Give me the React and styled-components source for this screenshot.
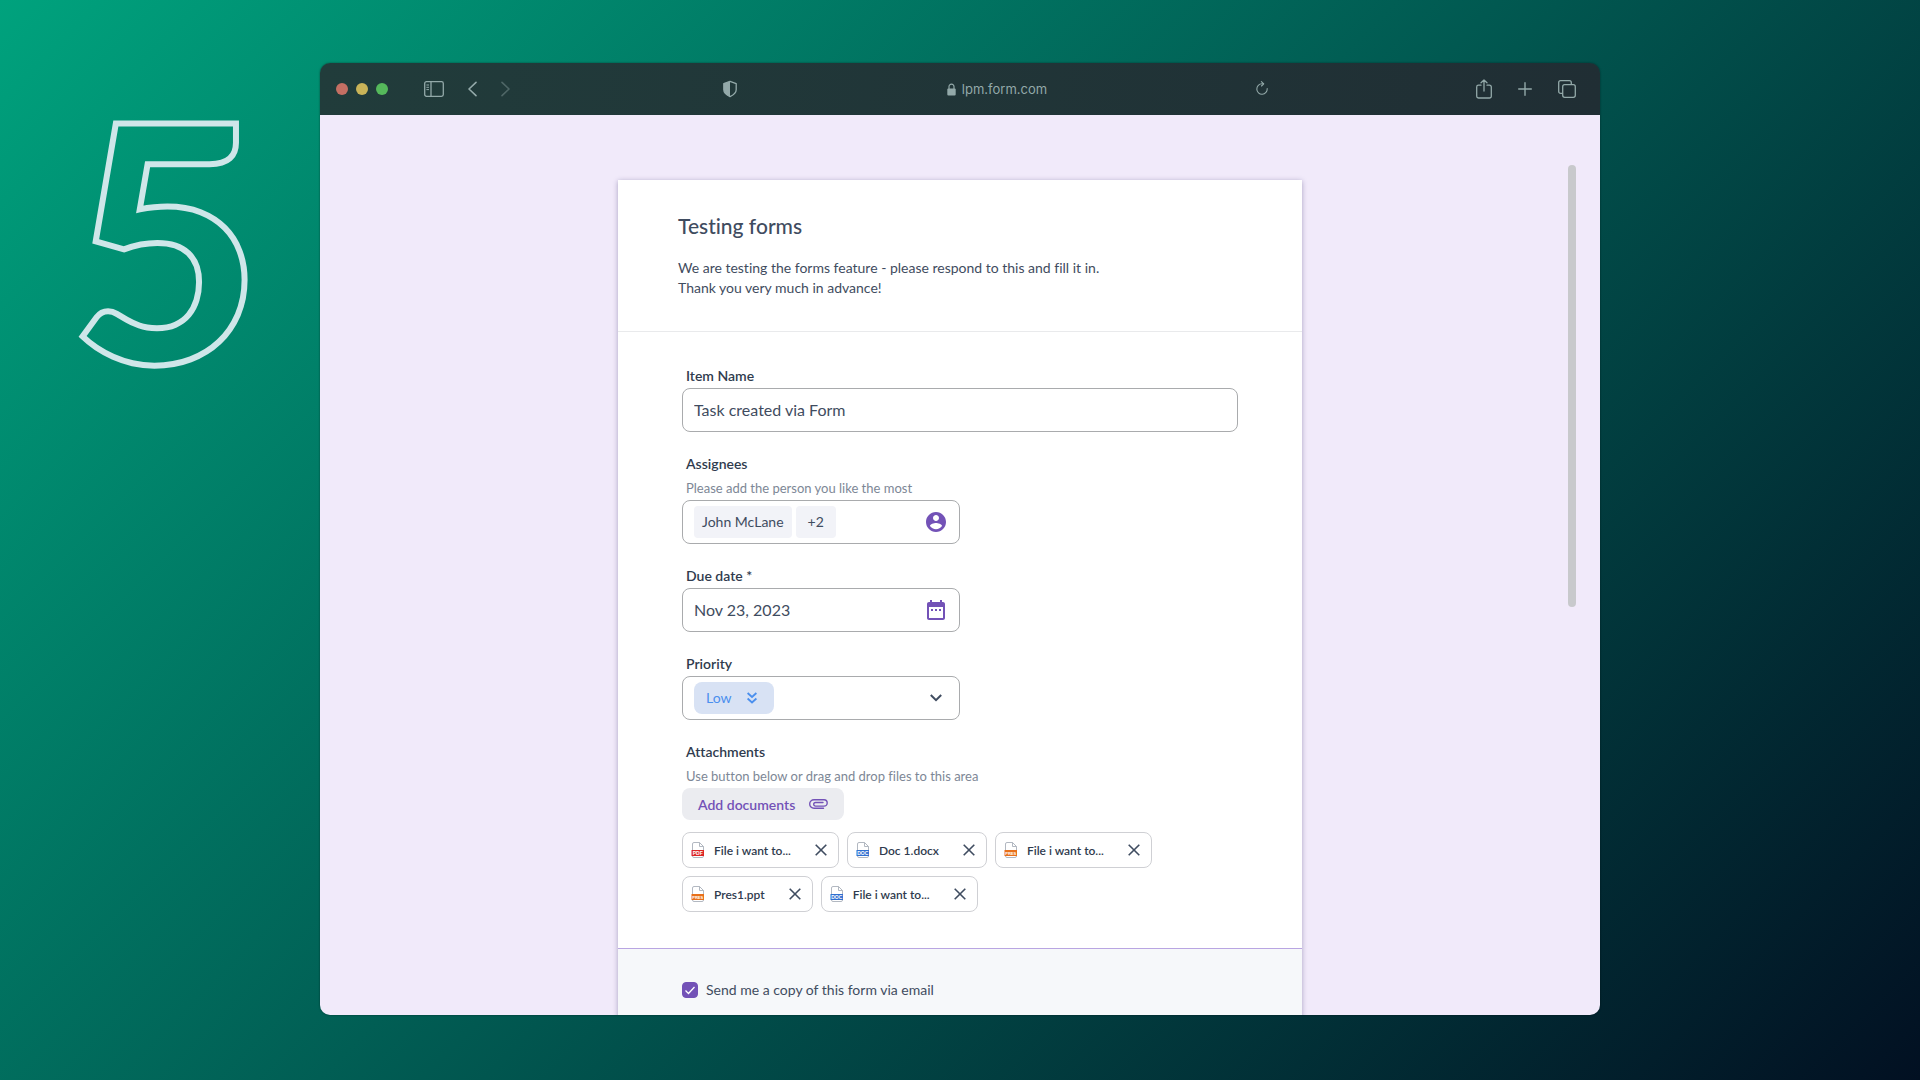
import React, { useState } from 'react';
import styled, { createGlobalStyle } from 'styled-components';

const initialFiles = [
  { id: 1, name: 'File i want to...', type: 'PDF' },
  { id: 2, name: 'Doc 1.docx', type: 'DOC' },
  { id: 3, name: 'File i want to...', type: 'PRES' },
  { id: 4, name: 'Pres1.ppt', type: 'PRES' },
  { id: 5, name: 'File i want to...', type: 'DOC' },
];

const fileColors = { PDF: '#dc2626', DOC: '#2f6fd0', PRES: '#e8701a' };

const SidebarIcon = () => (
  <svg width="20" height="16" viewBox="0 0 20 16" fill="none" stroke="currentColor">
    <rect x="0.7" y="0.7" width="18.6" height="14.6" rx="1.8" strokeWidth="1.3" />
    <path d="M7 1v14" strokeWidth="1.3" />
    <path d="M2.4 4h2.6M2.4 6.3h2.6M2.4 8.6h2.6" strokeWidth="1" />
  </svg>
);

const ChevronIcon = ({ flip }) => (
  <svg width="9" height="16" viewBox="0 0 9 16" fill="none" stroke="currentColor" strokeWidth="1.6" strokeLinecap="round" strokeLinejoin="round">
    <path d={flip ? 'M1 1.4l7 6.6-7 6.6' : 'M8 1.4L1 8l7 6.6'} />
  </svg>
);

const ShieldIcon = () => (
  <svg width="16" height="18" viewBox="0 0 16 18">
    <path d="M8 1.3l6.2 2.3v6.2c0 3-2.4 5.1-6.2 6.9-3.8-1.8-6.2-3.9-6.2-6.9V3.6z" fill="none" stroke="currentColor" strokeWidth="1.3" strokeLinejoin="round" />
    <path d="M8 1.3L1.8 3.6v6.2c0 3 2.4 5.1 6.2 6.9z" fill="currentColor" />
  </svg>
);

const LockIcon = () => (
  <svg width="9" height="13" viewBox="0 0 9 13">
    <path d="M2 6V3.6a2.5 2.5 0 0 1 5 0V6" fill="none" stroke="currentColor" strokeWidth="1.2" />
    <rect x="0.3" y="5.4" width="8.4" height="7.2" rx="1.1" fill="currentColor" />
  </svg>
);

const ReloadIcon = () => (
  <svg width="12" height="16" viewBox="0 0 12 16" fill="none" stroke="currentColor" strokeWidth="1.1" strokeLinecap="round" strokeLinejoin="round">
    <path d="M11.2 7.6A5.2 5.2 0 1 1 6 2.8h1.6" />
    <path d="M5.4 0.7l2.3 2.1-2.2 2.2" />
  </svg>
);

const ShareIcon = () => (
  <svg width="16" height="20" viewBox="0 0 16 20" fill="none" stroke="currentColor" strokeWidth="1.3" strokeLinecap="round" strokeLinejoin="round">
    <path d="M5 6.2H2.5A1.8 1.8 0 0 0 .7 8v9.2A1.8 1.8 0 0 0 2.5 19h11a1.8 1.8 0 0 0 1.8-1.8V8a1.8 1.8 0 0 0-1.8-1.8H11" />
    <path d="M8 12V1M5 3.8L8 1l3 2.8" />
  </svg>
);

const PlusIcon = () => (
  <svg width="14" height="14" viewBox="0 0 14 14" stroke="currentColor" strokeWidth="1.4" strokeLinecap="round">
    <path d="M7 .7v12.6M.7 7h12.6" />
  </svg>
);

const TabsIcon = () => (
  <svg width="18" height="18" viewBox="0 0 18 18" fill="none" stroke="currentColor" strokeWidth="1.3">
    <rect x="4.7" y="4.7" width="12.6" height="12.6" rx="2" />
    <path d="M4.7 13.3H2.6a1.9 1.9 0 0 1-1.9-1.9V2.6A1.9 1.9 0 0 1 2.6.7h8.8a1.9 1.9 0 0 1 1.9 1.9v2.1" />
  </svg>
);

const AccountIcon = () => (
  <svg width="24" height="24" viewBox="0 0 24 24" fill="currentColor">
    <path d="M12 2C6.48 2 2 6.48 2 12s4.48 10 10 10 10-4.48 10-10S17.52 2 12 2zm0 3c1.66 0 3 1.34 3 3s-1.34 3-3 3-3-1.34-3-3 1.34-3 3-3zm0 14.2c-2.5 0-4.71-1.28-6-3.22.03-1.99 4-3.08 6-3.08 1.99 0 5.97 1.09 6 3.08-1.29 1.94-3.5 3.22-6 3.22z" />
  </svg>
);

const CalendarIcon = () => (
  <svg width="24" height="24" viewBox="0 0 24 24" fill="currentColor">
    <path d="M9 11H7v2h2v-2zm4 0h-2v2h2v-2zm4 0h-2v2h2v-2zm2-7h-1V2h-2v2H8V2H6v2H5c-1.11 0-1.99.9-1.99 2L3 20c0 1.1.89 2 2 2h14c1.1 0 2-.9 2-2V6c0-1.1-.9-2-2-2zm0 16H5V9h14v11z" />
  </svg>
);

const DoubleDownIcon = () => (
  <svg width="10" height="12" viewBox="0 0 10 12" fill="none" stroke="currentColor" strokeWidth="1.8">
    <path d="M.6 1L5 5l4.4-4M.6 6.5l4.4 4 4.4-4" />
  </svg>
);

const DownIcon = () => (
  <svg width="12" height="8" viewBox="0 0 12 8" fill="none" stroke="currentColor" strokeWidth="2">
    <path d="M.8 1L6 6.2 11.2 1" />
  </svg>
);

const ClipIcon = () => (
  <svg width="19" height="10" viewBox="0 0 19 10" fill="none" stroke="currentColor" strokeWidth="1.4" strokeLinecap="round">
    <path d="M14.5 9.3H5A4.3 4.3 0 0 1 5 .7h10a3.2 3.2 0 0 1 0 6.4H6.500a1.800 1.800 0 0 1 0-3.600H14" />
  </svg>
);

const CloseIcon = () => (
  <svg width="12" height="12" viewBox="0 0 12 12" stroke="currentColor" strokeWidth="1.6">
    <path d="M.7.7l10.6 10.6M11.3.7L.7 11.3" />
  </svg>
);

const FileIcon = ({ type }) => (
  <svg width="14" height="16" viewBox="0 0 14 16">
    <path d="M1.5 14V2A1.5 1.5 0 0 1 3 .5h5.5l4 4V14a1.5 1.5 0 0 1-1.5 1.5H3A1.5 1.5 0 0 1 1.5 14zM8.5.5v4h4" fill="#fff" stroke="#a9b0ba" strokeWidth="0.9" />
    <rect x="0.5" y="8" width="12.5" height="6" fill={fileColors[type]} />
    <text x="6.75" y="12.7" textAnchor="middle" fontSize={type === 'PRES' ? 4 : 5} fontWeight="700" fill="#fff" fontFamily="Liberation Sans, sans-serif">{type}</text>
  </svg>
);

const App = () => {
  const [itemName, setItemName] = useState('Task created via Form');
  const [dueDate, setDueDate] = useState('Nov 23, 2023');
  const [files, setFiles] = useState(initialFiles);
  const [sendCopy, setSendCopy] = useState(true);

  const removeFile = (id) => setFiles(files.filter((file) => file.id !== id));

  return (
    <Stage>
      <GlobalStyle />
      <StepNumber>5</StepNumber>
      <BrowserWindow>
        <Toolbar>
          <ToolGroup $gap={24}>
            <Lights>
              <Light $color="#c46f63" />
              <Light $color="#c9b458" />
              <Light $color="#55b95b" />
            </Lights>
            <IconButton aria-label="Show sidebar"><SidebarIcon /></IconButton>
            <IconButton aria-label="Back"><ChevronIcon /></IconButton>
            <IconButton aria-label="Forward" disabled><ChevronIcon flip /></IconButton>
          </ToolGroup>
          <AddressBar>
            <IconButton aria-label="Privacy report"><ShieldIcon /></IconButton>
            <Address><LockIcon />lpm.form.com</Address>
            <IconButton aria-label="Reload"><ReloadIcon /></IconButton>
          </AddressBar>
          <ToolGroup $gap={26} $end>
            <IconButton aria-label="Share"><ShareIcon /></IconButton>
            <IconButton aria-label="New tab"><PlusIcon /></IconButton>
            <IconButton aria-label="Tab overview"><TabsIcon /></IconButton>
          </ToolGroup>
        </Toolbar>

        <Viewport>
          <ScrollThumb />
          <Card>
            <CardHeader>
              <Title>Testing forms</Title>
              <Description>
                We are testing the forms feature - please respond to this and fill it in.<br />
                Thank you very much in advance!
              </Description>
            </CardHeader>

            <Fields>
              <Field>
                <Label htmlFor="item-name">Item Name</Label>
                <Control>
                  <TextInput id="item-name" value={itemName} onChange={(e) => setItemName(e.target.value)} />
                </Control>
              </Field>

              <Field>
                <Label as="span">Assignees</Label>
                <Hint>Please add the person you like the most</Hint>
                <Control $half>
                  <Person>John McLane</Person>
                  <Person $wide>+2</Person>
                  <FieldButton type="button" aria-label="Choose assignees"><AccountIcon /></FieldButton>
                </Control>
              </Field>

              <Field>
                <Label htmlFor="due-date">Due date *</Label>
                <Control $half>
                  <TextInput id="due-date" value={dueDate} onChange={(e) => setDueDate(e.target.value)} />
                  <FieldButton type="button" aria-label="Open calendar"><CalendarIcon /></FieldButton>
                </Control>
              </Field>

              <Field>
                <Label htmlFor="priority">Priority</Label>
                <Control $half>
                  <PriorityBadge><DoubleDownIcon /></PriorityBadge>
                  <PrioritySelect id="priority" defaultValue="Low">
                    <option>Low</option>
                    <option>Medium</option>
                    <option>High</option>
                  </PrioritySelect>
                  <SelectArrow><DownIcon /></SelectArrow>
                </Control>
              </Field>

              <Field>
                <Label as="span">Attachments</Label>
                <Hint>Use button below or drag and drop files to this area</Hint>
                <AddButton type="button">Add documents <ClipIcon /></AddButton>
                <FileList>
                  {files.map((file) => (
                    <FileChip key={file.id}>
                      <FileIcon type={file.type} />
                      <FileName>{file.name}</FileName>
                      <RemoveButton type="button" aria-label={`Remove ${file.name}`} onClick={() => removeFile(file.id)}>
                        <CloseIcon />
                      </RemoveButton>
                    </FileChip>
                  ))}
                </FileList>
              </Field>
            </Fields>

            <CardFooter>
              <CopyLabel>
                <Checkbox type="checkbox" checked={sendCopy} onChange={(e) => setSendCopy(e.target.checked)} />
                <CheckMark viewBox="0 0 16 16"><path d="M3.5 8.5l3 3 6-6.5" /></CheckMark>
                Send me a copy of this form via email
              </CopyLabel>
            </CardFooter>
          </Card>
        </Viewport>
      </BrowserWindow>
    </Stage>
  );
};

const GlobalStyle = createGlobalStyle`
  * {
    box-sizing: border-box;
  }

  body {
    margin: 0;
    font-family: Lato, 'Open Sans', sans-serif;
    font-variant-ligatures: none;
    color: #3f4c60;
  }

  button, input, select {
    font: inherit;
    color: inherit;
  }

  svg {
    display: block;
    flex-shrink: 0;
  }
`;

const Stage = styled.main`
  display: grid;
  grid-template-columns: 1fr 4fr 1fr;
  height: 100vh;
  padding: 63px 0 65px;
  background: linear-gradient(135deg, #00a27d 0%, #015951 50%, #021022 100%);
`;

const StepNumber = styled.div`
  padding-left: 70px;
  font-family: Lato, sans-serif;
  font-size: 330px;
  font-weight: 900;
  line-height: 344px;
  color: transparent;
  -webkit-text-stroke: 6px #cfe6e9;
`;

const BrowserWindow = styled.section`
  display: flex;
  flex-direction: column;
  min-height: 0;
  border-radius: 10px;
  overflow: hidden;
  box-shadow: 0 0 2px rgba(0, 0, 0, 0.5);
`;

const Toolbar = styled.header`
  display: grid;
  grid-template-columns: 402fr 546fr 332fr;
  align-items: center;
  flex: 0 0 52px;
  color: #93a9a9;
  background: linear-gradient(100deg, #213c3b, #202e34);
`;

const ToolGroup = styled.div`
  display: flex;
  align-items: center;
  gap: ${props => props.$gap}px;
  padding: 0 24px 0 16px;
  justify-content: ${props => (props.$end ? 'flex-end' : 'flex-start')};
`;

const Lights = styled.div`
  display: flex;
  gap: 8px;
  margin-right: 12px;
`;

const Light = styled.span`
  width: 12px;
  height: 12px;
  border-radius: 50%;
  background: ${props => props.$color};
`;

const IconButton = styled.button`
  padding: 0;
  border: none;
  background: none;
  cursor: pointer;

  &:disabled {
    opacity: 0.4;
    cursor: default;
  }
`;

const AddressBar = styled.div`
  display: flex;
  align-items: center;
  justify-content: space-between;
`;

const Address = styled.div`
  display: flex;
  align-items: center;
  gap: 6px;
  font-family: Inter, Roboto, sans-serif;
  font-size: 13px;
`;

const Viewport = styled.div`
  position: relative;
  flex: 1;
  min-height: 0;
  overflow: hidden;
  padding-top: 65px;
  background: #f1eafa;
`;

const ScrollThumb = styled.div`
  position: absolute;
  top: 50px;
  right: 24px;
  width: 8px;
  height: 442px;
  border-radius: 4px;
  background: #c8c9cc;
`;

const Card = styled.form`
  max-width: 684px;
  margin: 0 auto;
  background: #fff;
  box-shadow: 0 1px 5px rgba(60, 50, 110, 0.4);
`;

const CardHeader = styled.div`
  padding: 32px 60px 33px;
  border-bottom: 1px solid #e9eaec;
`;

const Title = styled.h1`
  margin: 0 0 18px;
  font-size: 21px;
  font-weight: 500;
  line-height: 28px;
`;

const Description = styled.p`
  margin: 0;
  font-size: 14px;
  line-height: 20px;
`;

const Fields = styled.div`
  display: flex;
  flex-direction: column;
  gap: 20px;
  padding: 32px 64px 36px;
`;

const Field = styled.div`
  display: flex;
  flex-direction: column;
`;

const Label = styled.label`
  padding-left: 4px;
  font-size: 14px;
  font-weight: 600;
  line-height: 24px;
  color: #2f3b4e;
`;

const Hint = styled.p`
  margin: 0;
  padding-left: 4px;
  font-size: 13px;
  line-height: 24px;
  color: #7d8796;
`;

const Control = styled.div`
  position: relative;
  display: flex;
  align-items: center;
  gap: 4px;
  width: ${props => (props.$half ? '50%' : '100%')};
  height: 44px;
  padding: 0 11px;
  border: 1px solid #a9abad;
  border-radius: 8px;
`;

const TextInput = styled.input`
  flex: 1;
  min-width: 0;
  padding: 0 0 2px;
  border: none;
  outline: none;
  background: none;
  font-size: 16px;
`;

const Person = styled.span`
  padding: 0 ${props => (props.$wide ? 12 : 8)}px;
  border-radius: 4px;
  font-size: 14px;
  line-height: 32px;
  background: #f2f3f8;
`;

const FieldButton = styled.button`
  margin-left: auto;
  padding: 0;
  border: none;
  background: none;
  color: #7352b7;
  cursor: pointer;
`;

const PriorityBadge = styled.span`
  position: absolute;
  left: 11px;
  display: flex;
  align-items: center;
  justify-content: flex-end;
  width: 80px;
  height: 32px;
  padding-right: 17px;
  border-radius: 8px;
  color: #4a8fee;
  background: #d8e2f4;
`;

const PrioritySelect = styled.select`
  position: relative;
  appearance: none;
  flex: 1;
  height: 100%;
  padding: 0 12px 1px;
  border: none;
  outline: none;
  background: none;
  font-size: 14px;
  color: #4a8fee;
`;

const SelectArrow = styled.span`
  padding: 0 6px;
  color: #3f4c60;
  pointer-events: none;
`;

const AddButton = styled.button`
  display: flex;
  align-items: center;
  align-self: flex-start;
  gap: 14px;
  height: 32px;
  padding: 0 16px;
  border: none;
  border-radius: 8px;
  font-size: 14px;
  font-weight: 600;
  color: #7352b7;
  background: #ebecf0;
  cursor: pointer;
`;

const FileList = styled.ul`
  display: flex;
  flex-wrap: wrap;
  gap: 8px;
  margin: 12px 0 0;
  padding: 0;
  list-style: none;
`;

const FileChip = styled.li`
  display: flex;
  align-items: center;
  height: 36px;
  padding: 0 11px 0 8px;
  border: 1px solid #cfd0d4;
  border-radius: 8px;
`;

const FileName = styled.span`
  margin: 0 24px 0 9px;
  font-size: 12px;
  font-weight: 600;
  color: #2f3b4e;
`;

const RemoveButton = styled.button`
  padding: 0;
  border: none;
  background: none;
  cursor: pointer;
`;

const CardFooter = styled.div`
  padding: 31px 64px;
  border-top: 1px solid #b9a5e2;
  background: #f6f8fa;
`;

const CopyLabel = styled.label`
  position: relative;
  display: flex;
  align-items: center;
  gap: 8px;
  font-size: 14px;
  line-height: 20px;
`;

const Checkbox = styled.input`
  appearance: none;
  width: 16px;
  height: 16px;
  margin: 0;
  border: 1px solid #7352b7;
  border-radius: 4px;

  &:checked {
    background: #7352b7;
  }
`;

const CheckMark = styled.svg`
  position: absolute;
  left: 0;
  width: 16px;
  height: 16px;
  fill: none;
  stroke: #fff;
  stroke-width: 1.3;
  pointer-events: none;
`;

export default App;
